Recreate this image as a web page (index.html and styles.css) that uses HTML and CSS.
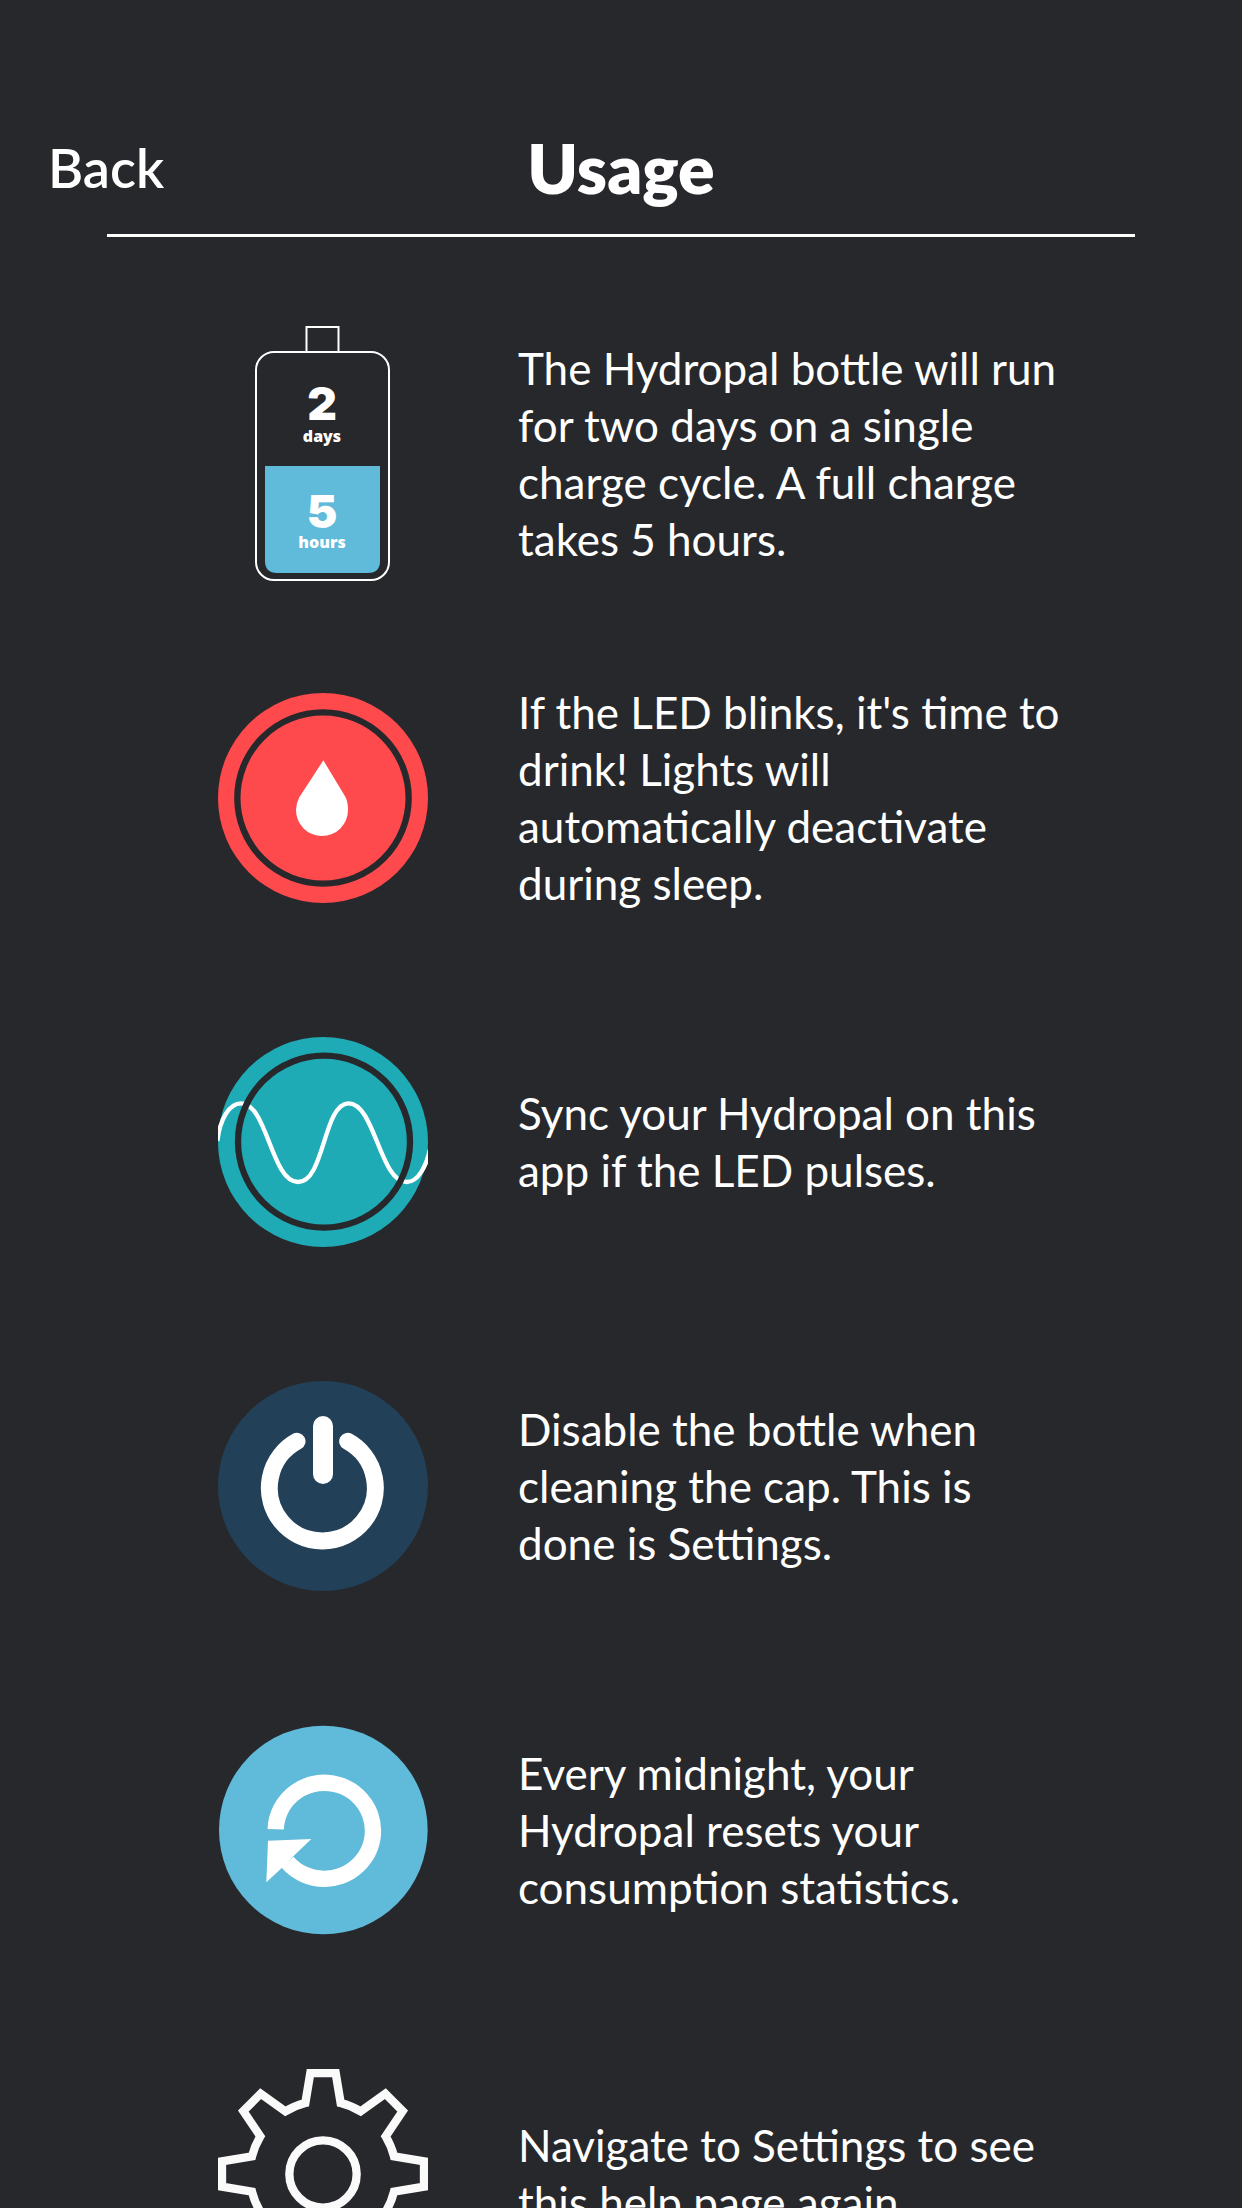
FILE: index.html
```html
<!DOCTYPE html>
<html lang="en">
<head>
<meta charset="utf-8">
<meta name="viewport" content="width=device-width, initial-scale=1">
<title>Usage</title>
<link rel="stylesheet" href="styles.css">
</head>
<body>
<div class="screen">
  <header class="bar">
    <button class="back" type="button">Back</button>
    <h1 class="title">Usage</h1>
  </header>
  <hr class="rule">
  <main class="scroller">
    <ul class="tips">
      <li class="tip">
        <svg class="icon battery" viewBox="0 0 136 256" role="img" aria-label="Battery">
          <path class="line" d="M51.5 25V1H83.5V25"/>
          <rect class="line" x="1" y="26" width="133" height="228" rx="18"/>
          <path class="sky" d="M10 140H125V235Q125 247 113 247H22Q10 247 10 235Z"/>
          <text class="figure" x="67" y="94">2</text>
          <text class="unit" x="67" y="116">days</text>
          <text class="figure" x="67" y="202">5</text>
          <text class="unit" x="67" y="222">hours</text>
        </svg>
        <p class="text">The Hydropal bottle will run for two days on a single charge cycle. A full charge takes 5 hours.</p>
      </li>
      <li class="tip">
        <svg class="icon" viewBox="54 39 630 630" role="img" aria-label="Red light">
          <circle class="red" cx="369" cy="354" r="315"/>
          <circle class="ring" cx="369" cy="354" r="257"/>
          <path class="white" d="M370 241L436 350Q444 364 444 390A78 78 0 0 1 288 390Q288 370 298 352Z"/>
        </svg>
        <p class="text">If the LED blinks, it's time to drink! Lights will automatically deactivate during sleep.</p>
      </li>
      <li class="tip">
        <svg class="icon" viewBox="54 54 630 630" role="img" aria-label="Pulsing light">
          <circle class="teal" cx="369" cy="369" r="315"/>
          <path class="wave" d="M52 366C60 300 88 253 123 253C202 253 214 489 294 489C374 489 370 253 446 253C524 253 540 489 620 489C652 489 680 446 692 380"/>
          <circle class="ring" cx="372" cy="368" r="258"/>
        </svg>
        <p class="text">Sync your Hydropal on this app if the LED pulses.</p>
      </li>
      <li class="tip">
        <svg class="icon" viewBox="54 60 630 630" role="img" aria-label="Power">
          <circle class="navy" cx="369" cy="375" r="315"/>
          <path class="arc round" d="M291 241A159 159 0 1 0 443 241"/>
          <rect class="white" x="339" y="165" width="60" height="204" rx="30"/>
        </svg>
        <p class="text">Disable the bottle when cleaning the cap. This is done is Settings.</p>
      </li>
      <li class="tip">
        <svg class="icon" viewBox="54 45 630 630" role="img" aria-label="Reset">
          <circle class="sky" cx="370" cy="360" r="313"/>
          <path class="arc" d="M227 358A146 144 0 1 1 262 456"/>
          <path class="white" d="M204 392L334 387L280 439L246 473L199 517Z"/>
        </svg>
        <p class="text">Every midnight, your Hydropal resets your consumption statistics.</p>
      </li>
      <li class="tip">
        <svg class="icon" viewBox="-315 -315 630 630" role="img" aria-label="Settings">
          <path class="gear" d="M38 -303L53 -213A219 219 0 0 1 113 -188L187 -241L239 -189L188 -113A219 219 0 0 1 213 -53L303 -38V38L213 53A219 219 0 0 1 188 113L239 189L187 241L113 188A219 219 0 0 1 53 213L38 303H-38L-53 213A219 219 0 0 1 -113 188L-187 241L-239 189L-188 113A219 219 0 0 1 -213 53L-303 38V-38L-213 -53A219 219 0 0 1 -188 -113L-239 -189L-187 -241L-113 -188A219 219 0 0 1 -53 -213L-38 -303Z"/>
          <circle class="gear" r="101"/>
        </svg>
        <p class="text">Navigate to Settings to see this help page again.</p>
      </li>
    </ul>
  </main>
</div>
</body>
</html>
```
FILE: styles.css
```css
* {
  box-sizing: border-box;
  margin: 0;
  padding: 0;
}

body {
  background: #27282c;
  color: #fff;
  font-family: Lato, "Open Sans", sans-serif;
}

.screen {
  display: flex;
  flex-direction: column;
  height: 100vh;
}

.bar {
  display: grid;
  grid-template-columns: 1fr auto 1fr;
  align-items: center;
  padding: 125px 48px 23px;
}

.back {
  justify-self: start;
  border: 0;
  background: none;
  color: inherit;
  font: 600 54px/86px Lato, "Open Sans", sans-serif;
  cursor: pointer;
}

.title {
  font-size: 68px;
  font-weight: 800;
  line-height: 86px;
}

.rule {
  flex: none;
  height: 3px;
  margin: 0 107px;
  border: 0;
  background: #fff;
}

/* The list scrolls beneath the fixed header. */
.scroller {
  flex: 1;
  min-height: 0;
  overflow-y: auto;
  scrollbar-width: none;
}

.tips {
  padding: 45px 170px 45px 218px;
  list-style: none;
}

.tip {
  display: grid;
  grid-template-columns: 210px 1fr;
  align-items: center;
  gap: 90px;
  min-height: 344px;
}

.icon {
  display: block;
  width: 210px;
  height: 210px;
}

.battery {
  justify-self: center;
  width: 136px;
  height: 256px;
}

.text {
  font-size: 44px;
  line-height: 57px;
}

.line,
.ring,
.wave,
.arc,
.gear {
  fill: none;
  stroke: #fff;
}

.line { stroke-width: 2; }
.ring { stroke: #27282c; stroke-width: 19; }
.wave { stroke-width: 13; }
.arc { stroke-width: 49; }
.round { stroke-width: 51; stroke-linecap: round; }
.gear { stroke: #fafafa; stroke-width: 25; }

.white { fill: #fff; }
.red { fill: #ff4a4d; }
.teal { fill: #1fabb6; }
.navy { fill: #234059; }
.sky { fill: #60bad9; }

.figure,
.unit {
  fill: #fff;
  text-anchor: middle;
}

.figure { font: 900 46px Inter, sans-serif; }
.unit { font: 800 16px "Open Sans", sans-serif; }
```
